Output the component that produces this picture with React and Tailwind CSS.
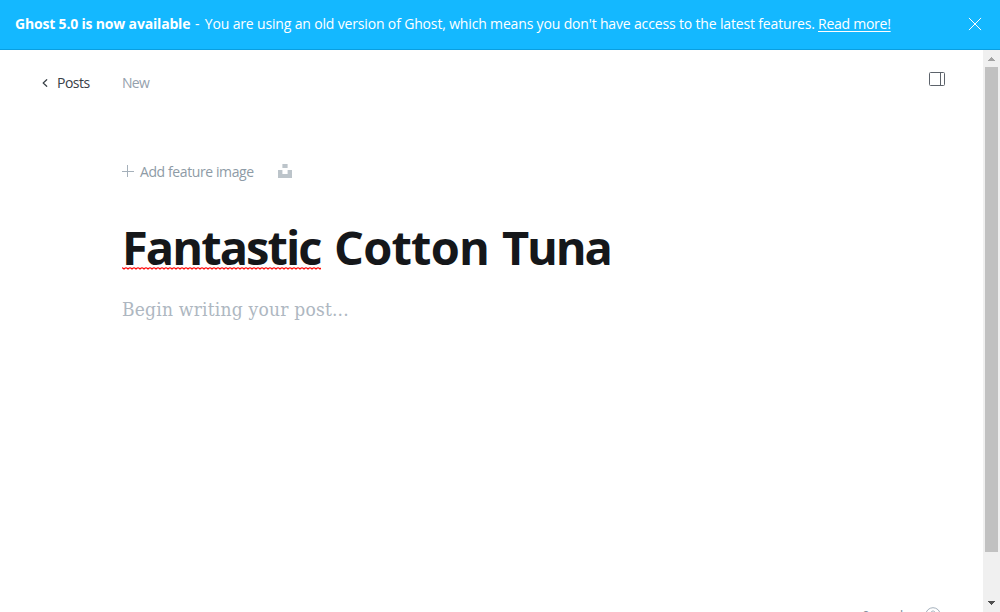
function Banner() {
  return (
    <header className="flex h-[50px] shrink-0 items-center justify-between border-b border-[#0a9fe0] bg-[#14b8ff] pr-[18px] pb-px pl-[15px] text-[14px] leading-5 text-white">
      <p className="flex whitespace-pre">
        <b className="w-[180px] font-bold tracking-[-0.18px]">Ghost 5.0 is now available</b>
        <span className="w-[623px] tracking-[-0.16px]"><span className="mr-[2px]">-</span> You are using an old version of Ghost, which means you don't have access to the latest features. </span>
        <a className="tracking-[-0.25px] underline underline-offset-2">Read more!</a>
      </p>
      <svg className="size-[14px]" viewBox="0 0 14 14" fill="none" stroke="#fff" strokeWidth="1" strokeLinecap="round">
        <path d="M1.2 1.2 12.8 12.8M12.8 1.2 1.2 12.8" />
      </svg>
    </header>
  );
}

function Toolbar() {
  return (
    <nav className="flex h-[66px] shrink-0 items-center pr-[38px] pl-[42px] text-[14px] leading-5">
      <svg className="h-[8px] w-[6px]" viewBox="0 0 6 8" fill="none" stroke="#394047" strokeWidth="1.2" strokeLinecap="round" strokeLinejoin="round">
        <path d="M4.7.7 1.2 4l3.5 3.3" />
      </svg>
      <span className="ml-[9px] w-[65px] font-medium tracking-[-0.5px] text-[#394047]">Posts</span>
      <span className="tracking-[-0.7px] text-[#95a1ad]">New</span>
      <svg className="mb-[8px] ml-auto h-[14px] w-[16px]" viewBox="0 0 16 14" fill="none" stroke="#5d636b">
        <rect x=".5" y=".5" width="15" height="13" rx="1" />
        <path d="M11.5.5v13" />
      </svg>
    </nav>
  );
}

function Editor() {
  return (
    <section className="flex grow flex-col pt-[46px] pl-[122px]">
      <div className="flex h-5 items-center text-[14px] leading-5 text-[#8e9ba6]">
        <svg className="mb-[2px] size-[12px]" viewBox="0 0 12 12" fill="none" stroke="#a5b0ba">
          <path d="M5.5 0v12M0 6.5h12" />
        </svg>
        <span className="ml-[6px] w-[138px] tracking-[-0.4px] whitespace-nowrap">Add feature image</span>
        <svg className="mb-[2px] size-[14px]" viewBox="0 0 14 14" fill="#bcc4ca">
          <path d="M4.4 0h5.2v4H4.4zM0 6h4.400v4h5.200V6H14v8H0z" />
        </svg>
      </div>
      <h1 className="mt-[33px] flex h-[64px] text-[47px] leading-[64px] font-bold whitespace-pre text-[#15171a]">
        <span className="relative w-[199px] tracking-[-1.95px]">
          Fantastic
          <svg className="absolute top-[52px] left-0 h-[3px] w-full" fill="none" stroke="#f00" strokeWidth="1.3">
            <defs>
              <pattern id="wave" width="4" height="3" patternUnits="userSpaceOnUse">
                <path d="M-1 -.5 0 .5 2 2 4 .5 5 -.5" />
              </pattern>
            </defs>
            <rect width="100%" height="3" fill="url(#wave)" stroke="none" />
          </svg>
        </span>{" "}
        <span className="ml-[13px] w-[168px] tracking-[-0.8px]">Cotton </span>
        <span className="tracking-[-2.2px]">Tuna</span>
      </h1>
      <p className="mt-[14px] font-['DejaVu_Serif_Condensed','DejaVu_Serif',serif] text-[19px] leading-8 tracking-[0.22px] text-[#aeb7c1]">Begin writing your post...</p>
    </section>
  );
}

function Footer() {
  return (
    <footer className="flex h-[9px] shrink-0 items-start justify-end overflow-hidden pr-[42px] text-[13px] leading-5 text-[#7c8b9a]">
      <span className="mt-[2px] mr-[16px] tracking-[-0.2px]">0 words</span>
      <svg className="mt-[4px] size-4 shrink-0" viewBox="0 0 16 16" fill="none" stroke="#a5b1bd">
        <circle cx="8" cy="8" r="7.3" />
        <path d="M5.8 6.2c0-3 4.4-2.8 4.4-.2C10.200 7.500 8 7.600 8 9.500M8 11v1" />
      </svg>
    </footer>
  );
}

function Scrollbar() {
  return (
    <div className="flex w-[17px] shrink-0 flex-col items-center justify-between bg-[#f0f0f0]">
      <svg className="h-[17px] w-[17px] shrink-0" viewBox="0 0 17 17" fill="#a3a3a3" shapeRendering="crispEdges">
        <path d="M8 7h1v1h1v1h1v1h1v1H5v-1h1V9h1V8h1z" />
      </svg>
      <div className="mr-px h-[485px] w-[13px] bg-[#c1c1c1]" />
      <div className="grow" />
      <svg className="h-[17px] w-[17px] shrink-0" viewBox="0 0 17 17" fill="#505050" shapeRendering="crispEdges">
        <path d="M8 10h1V9h1V8h1V7h1V6H5v1h1v1h1v1h1z" />
      </svg>
    </div>
  );
}

export default function App() {
  return (
    <div className="flex h-[612px] w-[1000px] flex-col overflow-hidden bg-white font-['Open_Sans','Noto_Sans',sans-serif]">
      <Banner />
      <div className="flex min-h-0 grow">
        <main className="flex min-w-0 grow flex-col">
          <Toolbar />
          <Editor />
          <Footer />
        </main>
        <Scrollbar />
      </div>
    </div>
  );
}
